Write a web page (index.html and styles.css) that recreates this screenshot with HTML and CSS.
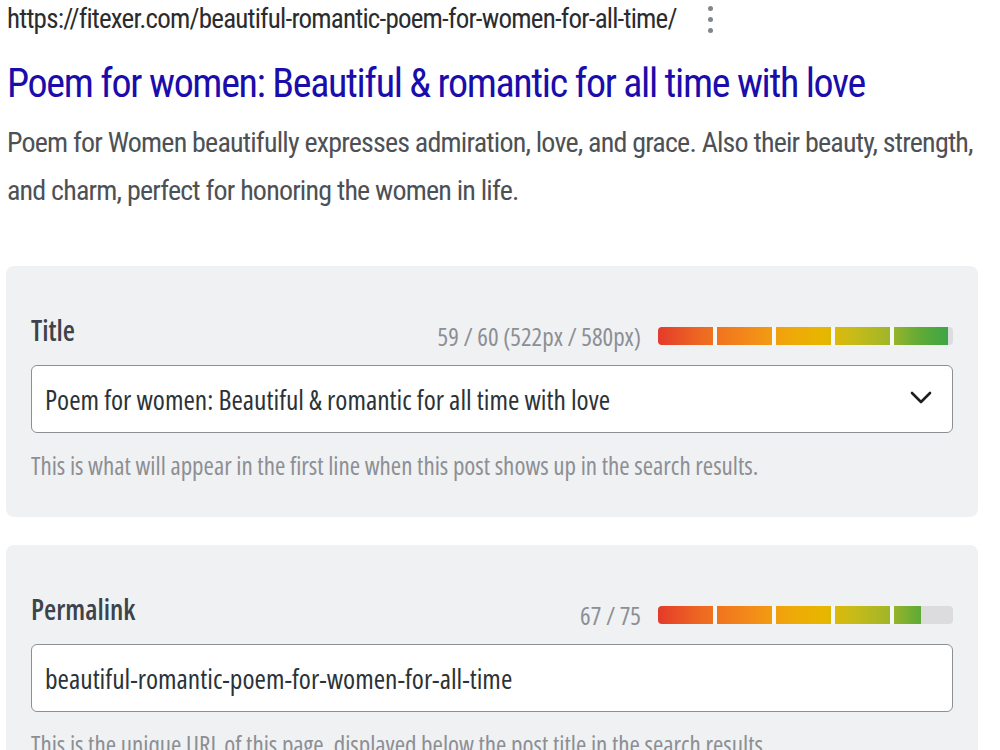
FILE: index.html
```html
<!DOCTYPE html>
<html lang="en">
<head>
  <meta charset="UTF-8">
  <title>Snippet editor</title>
  <link rel="stylesheet" href="styles.css">
</head>
<body>

  <!-- search result preview -->
  <div class="serp">
    <div class="serp-url">
      <span>https://fitexer.com/beautiful-romantic-poem-for-women-for-all-time/</span>
      <span class="kebab"><i></i><i></i><i></i></span>
    </div>
    <h3 class="serp-title">Poem for women: Beautiful &amp; romantic for all time with love</h3>
    <p class="serp-desc">Poem for Women beautifully expresses admiration, love, and grace. Also their beauty, strength, and charm, perfect for honoring the women in life.</p>
  </div>

  <!-- title field -->
  <div class="field-box">
    <div class="field-head">
      <label class="field-label">Title</label>
      <div class="meter">
        <span class="count">59 / 60 (522px / 580px)</span>
        <div class="bar"><div class="fill" style="width:98.3%"></div></div>
      </div>
    </div>
    <div class="field-input">
      <span>Poem for women: Beautiful &amp; romantic for all time with love</span>
      <svg class="chevron" width="22" height="14" viewBox="0 0 22 14"><polyline points="2,2 11,11 20,2" fill="none" stroke="#1e1e1e" stroke-width="2.6" stroke-linecap="round" stroke-linejoin="round"/></svg>
    </div>
    <p class="help">This is what will appear in the first line when this post shows up in the search results.</p>
  </div>

  <!-- permalink field -->
  <div class="field-box">
    <div class="field-head">
      <label class="field-label">Permalink</label>
      <div class="meter">
        <span class="count">67 / 75</span>
        <div class="bar"><div class="fill" style="width:89.3%"></div></div>
      </div>
    </div>
    <div class="field-input">
      <span>beautiful-romantic-poem-for-women-for-all-time</span>
    </div>
    <p class="help">This is the unique URL of this page, displayed below the post title in the search results.</p>
  </div>

</body>
</html>
```

FILE: styles.css
```css
* { margin: 0; padding: 0; box-sizing: border-box; }
html, body { overflow: hidden; }
body {
  background-color: #fff;
  font-family: "Open Sans", "Noto Sans", sans-serif;
  font-stretch: 78%;
}

/* search result preview */
.serp {
  padding: 5px 10px 0 7px;
  font-family: Roboto, "Liberation Sans", Arial, sans-serif;
  font-stretch: 75%;
}

.serp-url {
  display: flex;
  align-items: center;
  height: 28px;
  font-size: 27px;
  line-height: 28px;
  letter-spacing: -0.8px;
  color: #2b2c2f;
  white-space: nowrap;
}

.kebab {
  display: flex;
  flex-direction: column;
  gap: 6px;
  margin-left: 31px;
}
.kebab i {
  display: block;
  width: 5px;
  height: 5px;
  border-radius: 50%;
  background-color: #80868b;
}

.serp-title {
  margin-top: 26px;
  font-size: 40px;
  line-height: 50px;
  letter-spacing: -1.35px;
  font-weight: normal;
  color: #1a0dab;
  white-space: nowrap;
}

.serp-desc {
  margin-top: 10px;
  font-size: 28px;
  line-height: 48px;
  letter-spacing: -0.8px;
  color: #4d5156;
}

/* editor fields */
.field-box {
  margin: 51px 22px 0 6px;
  padding: 52px 25px 37px;
  background-color: #f0f1f3;
  border-radius: 8px;
}
.field-box + .field-box { margin-top: 28px; }

.field-head {
  display: flex;
  align-items: center;
  justify-content: space-between;
  height: 36px;
}

.field-label {
  margin-bottom: 12px;
  font-size: 28px;
  font-weight: 600;
  color: #3c434a;
}

.meter {
  display: flex;
  align-items: center;
  gap: 17px;
}

.count {
  font-size: 25px;
  color: #8c8f94;
}

.bar {
  position: relative;
  width: 295px;
  height: 18px;
  background-color: #dcdcde;
  border-radius: 4px;
  overflow: hidden;
}
.bar::after {
  content: "";
  position: absolute;
  top: 0; left: 0; right: 0; bottom: 0;
  background: repeating-linear-gradient(90deg, transparent 0 55px, #f6f7f7 55px 59px);
  background-size: 236px 100%;
  background-repeat: no-repeat;
}
.fill {
  height: 100%;
  background: linear-gradient(90deg, #e33b2a 0%, #ee6722 14%, #f3881a 30%, #f0a70a 44%, #e8b600 56%, #c9bb18 66%, #a2b628 78%, #64ab35 88%, #36a548 100%);
  background-size: 295px 100%;
}

.field-input {
  display: flex;
  align-items: center;
  justify-content: space-between;
  height: 68px;
  margin-top: 11px;
  padding: 0 20px 0 13px;
  background-color: #fff;
  border: 1px solid #8c8f94;
  border-radius: 6px;
  font-size: 27.5px;
  color: #2c3338;
}

.chevron { margin-top: -3px; }

.help {
  margin-top: 17px;
  font-size: 25px;
  line-height: 30px;
  color: #8c8f94;
}
```
